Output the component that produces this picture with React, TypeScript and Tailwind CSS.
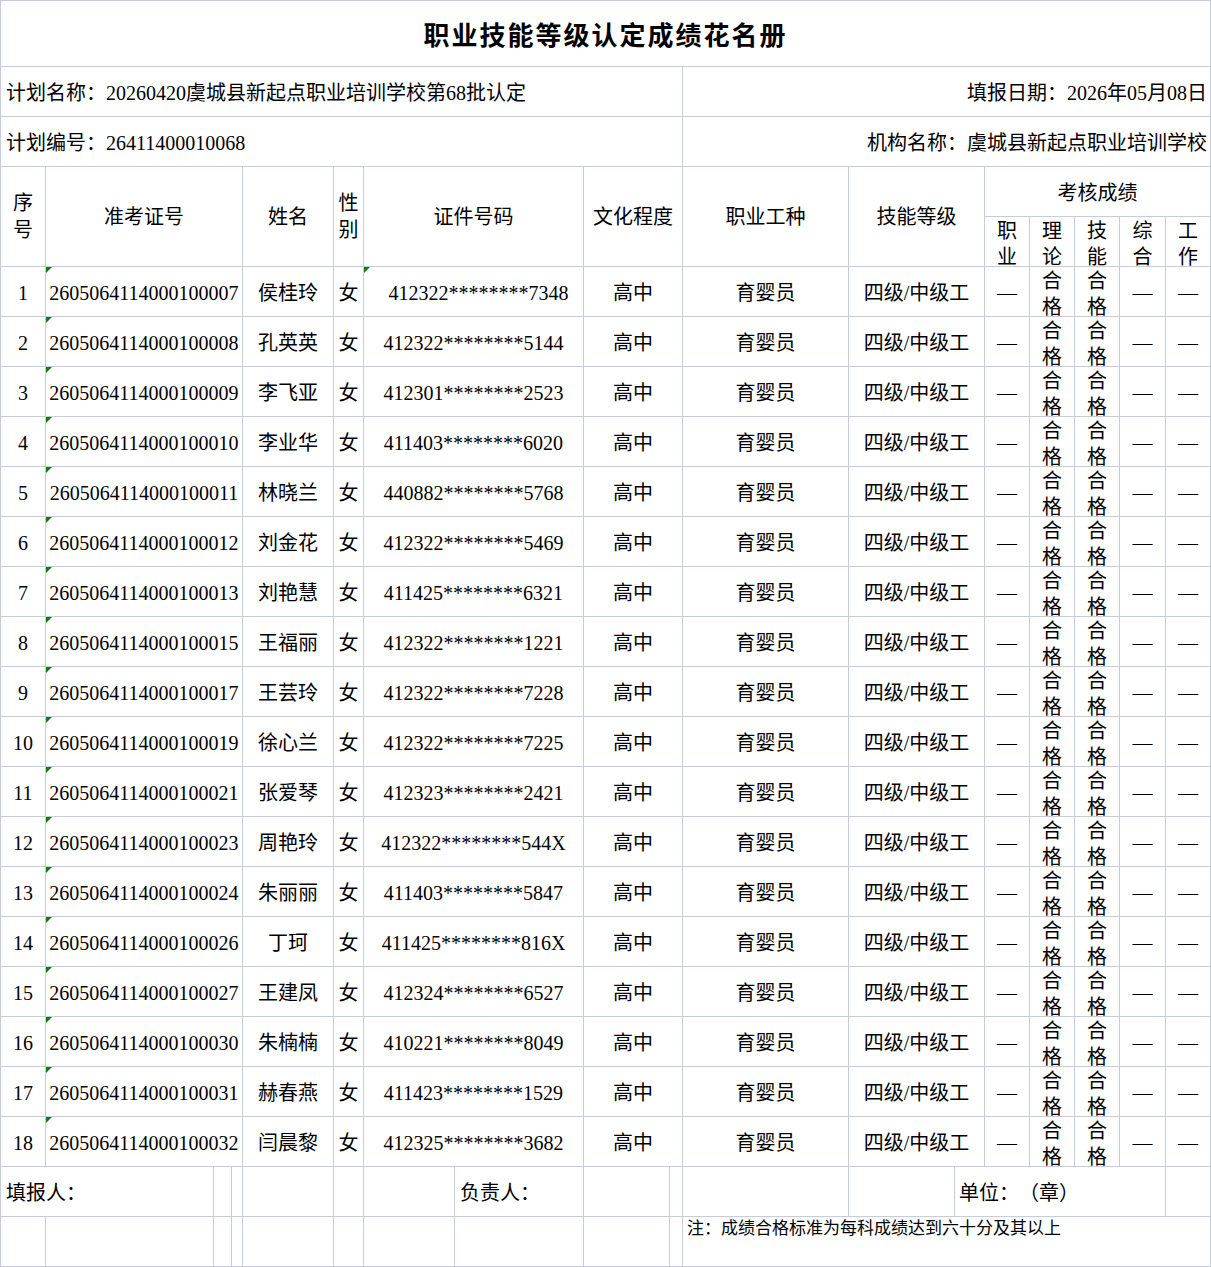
const ROWS = [
  ["2605064114000100007", "侯桂玲", "412322********7348"],
  ["2605064114000100008", "孔英英", "412322********5144"],
  ["2605064114000100009", "李飞亚", "412301********2523"],
  ["2605064114000100010", "李业华", "411403********6020"],
  ["2605064114000100011", "林晓兰", "440882********5768"],
  ["2605064114000100012", "刘金花", "412322********5469"],
  ["2605064114000100013", "刘艳慧", "411425********6321"],
  ["2605064114000100015", "王福丽", "412322********1221"],
  ["2605064114000100017", "王芸玲", "412322********7228"],
  ["2605064114000100019", "徐心兰", "412322********7225"],
  ["2605064114000100021", "张爱琴", "412323********2421"],
  ["2605064114000100023", "周艳玲", "412322********544X"],
  ["2605064114000100024", "朱丽丽", "411403********5847"],
  ["2605064114000100026", "丁珂", "411425********816X"],
  ["2605064114000100027", "王建凤", "412324********6527"],
  ["2605064114000100030", "朱楠楠", "410221********8049"],
  ["2605064114000100031", "赫春燕", "411423********1529"],
  ["2605064114000100032", "闫晨黎", "412325********3682"],
]

const SUBS = ["职业", "理论", "技能", "综合", "工作"]

// every cell draws its own right and bottom line, the sheet draws left and top
const cell = "border-r border-b border-[#c6ccdc] flex items-center justify-center text-center"

function Mark() {
  return (
    <span className="absolute left-0 top-0 h-0 w-0 border-t-[6px] border-r-[6px] border-t-[#0b7d0b] border-r-transparent" />
  )
}

function Stack({ text }: { text: string }) {
  return (
    <span className="flex flex-col leading-[26px]">
      {text.split("").map((ch, i) => (
        <span key={i}>{ch}</span>
      ))}
    </span>
  )
}

export default function App() {
  return (
    <div className="min-h-screen bg-white text-black [text-spacing-trim:space-all]">
      <div className="grid w-[1211px] grid-cols-[45px_168px_18px_11px_91px_30px_91px_129px_86px_13px_166px_106px_30px_45px_45px_45px_46px_45px] grid-rows-[66px_repeat(24,50px)] border-l border-t border-[#c6ccdc] font-['Liberation_Serif','Noto_Sans_CJK_SC',serif] text-[20px]">
        {/* title */}
        <div className={`${cell} col-span-18 font-['Noto_Sans_CJK_SC',sans-serif] text-[26px] font-bold tracking-[2px]`}>
          职业技能等级认定成绩花名册
        </div>

        {/* plan info */}
        <div className={`${cell} col-span-10 justify-start pl-[5px] pt-[2px]`}>
          计划名称：20260420虞城县新起点职业培训学校第68批认定
        </div>
        <div className={`${cell} col-span-8 justify-end pr-[3px] pt-[2px]`}>填报日期：2026年05月08日</div>
        <div className={`${cell} col-span-10 justify-start pl-[5px] pt-[2px]`}>计划编号：26411400010068</div>
        <div className={`${cell} col-span-8 justify-end pr-[3px] pt-[2px]`}>机构名称：虞城县新起点职业培训学校</div>

        {/* header */}
        <div className={`${cell} row-span-2`}>
          <span className="flex flex-col leading-[27px]">
            <span>序</span>
            <span>号</span>
          </span>
        </div>
        <div className={`${cell} col-span-3 row-span-2`}>准考证号</div>
        <div className={`${cell} row-span-2`}>姓名</div>
        <div className={`${cell} row-span-2`}>
          <span className="flex flex-col leading-[27px]">
            <span>性</span>
            <span>别</span>
          </span>
        </div>
        <div className={`${cell} col-span-2 row-span-2`}>证件号码</div>
        <div className={`${cell} col-span-2 row-span-2`}>文化程度</div>
        <div className={`${cell} row-span-2`}>职业工种</div>
        <div className={`${cell} col-span-2 row-span-2`}>技能等级</div>
        <div className={`${cell} col-span-5 pt-[2px]`}>考核成绩</div>
        {SUBS.map((s) => (
          <div key={s} className={`${cell} pt-[4px]`}>
            <Stack text={s} />
          </div>
        ))}

        {/* students */}
        {ROWS.map(([id, name, card], i) => (
          <div key={id} className="contents">
            <div className={`${cell} pt-[3px]`}>{i + 1}</div>
            <div className={`${cell} relative col-span-3 pt-[3px]`}>
              <Mark />
              {id}
            </div>
            <div className={`${cell} pt-[3px]`}>{name}</div>
            <div className={`${cell} pt-[3px]`}>女</div>
            <div className={`${cell} relative col-span-2 pt-[3px] ${i === 0 ? "pl-[10px]" : ""}`}>
              {i === 0 && <Mark />}
              {card}
            </div>
            <div className={`${cell} col-span-2 pt-[3px]`}>高中</div>
            <div className={`${cell} pt-[3px]`}>育婴员</div>
            <div className={`${cell} col-span-2 pt-[3px]`}>四级/中级工</div>
            <div className={`${cell} pt-[3px]`}>—</div>
            <div className={`${cell} pt-[4px]`}>
              <Stack text="合格" />
            </div>
            <div className={`${cell} pt-[4px]`}>
              <Stack text="合格" />
            </div>
            <div className={`${cell} pt-[3px]`}>—</div>
            <div className={`${cell} pt-[3px]`}>—</div>
          </div>
        ))}

        {/* signatures */}
        <div className={`${cell} col-span-2 justify-start pl-[5px] pt-[3px]`}>填报人：</div>
        <div className={cell} />
        <div className={cell} />
        <div className={cell} />
        <div className={cell} />
        <div className={cell} />
        <div className={`${cell} justify-start pl-[5px] pt-[3px]`}>负责人：</div>
        <div className={cell} />
        <div className={cell} />
        <div className={cell} />
        <div className={cell} />
        <div className={`${cell} col-span-5 justify-start pl-[4px] pt-[3px]`}>单位：（章）</div>
        <div className={cell} />

        {[0, 1, 2, 3, 4, 5, 6, 7, 8, 9].map((k) => (
          <div key={k} className={cell} />
        ))}
        <div className={`${cell} col-span-8 items-start justify-start pl-[4px] font-['Noto_Sans_CJK_SC',sans-serif] text-[17px] leading-[20px]`}>
          注：成绩合格标准为每科成绩达到六十分及其以上
        </div>
      </div>
    </div>
  )
}
